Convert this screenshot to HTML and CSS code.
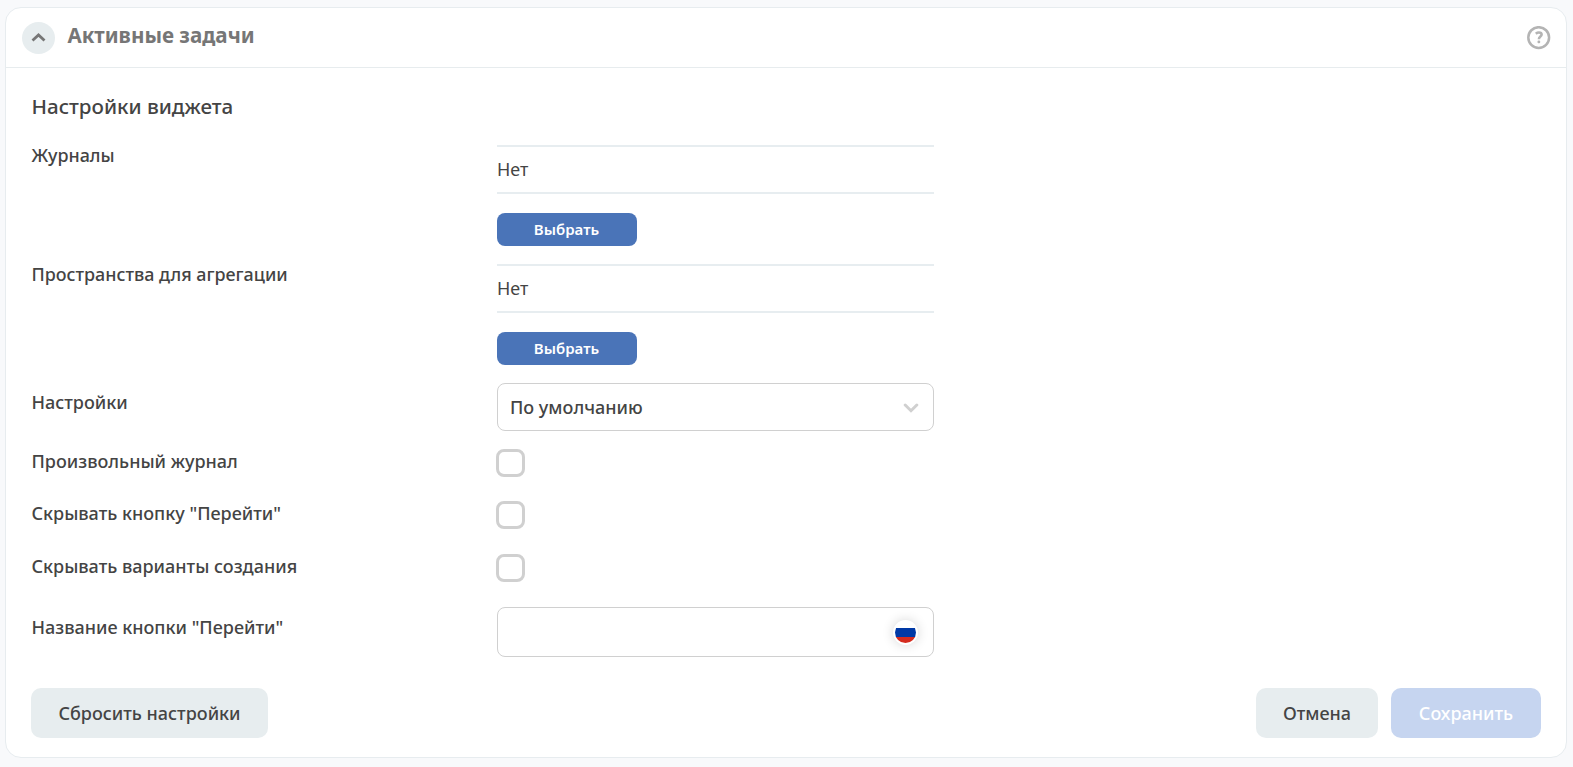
FILE: index.html
```html
<!DOCTYPE html>
<html lang="ru">
<head>
<meta charset="utf-8">
<title>Активные задачи</title>
<link rel="stylesheet" href="styles.css">
</head>
<body>
<section class="card">
  <header class="card-header">
    <button class="toggle" aria-label="Свернуть"><svg width="15" height="9" viewBox="0 0 15 9"><path d="M1.5 7.6 7.5 2l6 5.6"/></svg></button>
    <h1 class="title">Активные задачи</h1>
    <svg class="help" width="24" height="24" viewBox="0 0 24 24"><circle cx="11.7" cy="11.6" r="10.4"/><path d="M8.8 7.7Q10.3 6.5 11.9 6.5C13.6 6.5 14.6 7.3 14.6 8.6C14.6 10.6 11.9 10.6 11.9 13.2"/><rect x="10.5" y="14.6" width="2.7" height="2.6" rx="1"/></svg>
  </header>
  <div class="body">
    <h2 class="heading">Настройки виджета</h2>
    <div class="row row-list">
      <span class="label">Журналы</span>
      <div class="field"><div class="value">Нет</div><button class="choose">Выбрать</button></div>
    </div>
    <div class="row row-list">
      <span class="label">Пространства для агрегации</span>
      <div class="field"><div class="value">Нет</div><button class="choose">Выбрать</button></div>
    </div>
    <div class="row row-select">
      <span class="label">Настройки</span>
      <div class="select"><span>По умолчанию</span><svg width="16" height="10" viewBox="0 0 16 10"><path d="m2.2 2 5.8 5.7L13.8 2"/></svg></div>
    </div>
    <div class="row row-check"><span class="label">Произвольный журнал</span><span class="checkbox"></span></div>
    <div class="row row-check"><span class="label">Скрывать кнопку "Перейти"</span><span class="checkbox"></span></div>
    <div class="row row-check row-check-last"><span class="label">Скрывать варианты создания</span><span class="checkbox"></span></div>
    <div class="row row-input">
      <span class="label">Название кнопки "Перейти"</span>
      <div class="input"><span class="flag"><svg width="21" height="21" viewBox="0 0 21 21"><clipPath id="round"><circle cx="10.5" cy="10.5" r="10.5"/></clipPath><g clip-path="url(#round)"><path fill="#fff" d="M0 0h21v6H0z"/><path fill="#0039a6" d="M0 6h21v9H0z"/><path fill="#d52b1e" d="M0 15h21v6H0z"/></g></svg></span></div>
    </div>
    <footer class="actions">
      <button class="btn reset">Сбросить настройки</button>
      <button class="btn cancel">Отмена</button>
      <button class="btn save">Сохранить</button>
    </footer>
  </div>
</section>
</body>
</html>
```

FILE: styles.css
```css
* { box-sizing: border-box; }
body {
  margin: 0;
  padding: 7px 6px 9px 5px;
  height: 767px;
  overflow: hidden;
  background: #f8f9fb;
  color: #444;
  font: 500 18px/24px "Noto Sans", "Open Sans", sans-serif;
}
button { border: 0; padding: 0; font: inherit; color: inherit; }
svg { display: block; }
.card {
  height: 751px;
  border: 1px solid #e7ecef;
  border-radius: 16px;
  background: #fff;
}
.card-header {
  display: flex;
  align-items: center;
  height: 60px;
  padding: 0 15px 0 16px;
  border-bottom: 1px solid #e7ecee;
}
.toggle {
  display: flex;
  align-items: center;
  justify-content: center;
  width: 33px;
  height: 32px;
  border-radius: 50%;
  background: #e7edef;
}
.toggle path { fill: none; stroke: #767676; stroke-width: 2.8; }
.title { margin: -5px auto 0 12.4px; font-size: 20.6px; font-weight: 700; color: #767676; }
.help circle { fill: none; stroke: #b4b4b4; stroke-width: 2.5; }
.help path { fill: none; stroke: #b4b4b4; stroke-width: 2.6; }
.help rect { fill: #b4b4b4; }
.body { padding: 0 25px; }
.heading { margin: 0; padding: 26px 0 0 .5px; height: 75px; font-size: 20.6px; font-weight: 500; }
.row { display: grid; grid-template-columns: 466px 437px; align-items: start; }
.label { padding-left: .5px; }
.row-list { height: 119px; }
.row-list .label { font-size: 17.9px; }
.field { padding-top: 2px; }
.value {
  height: 49px;
  margin-bottom: 19px;
  padding-top: 10px;
  border: solid #e7edf0;
  border-width: 2px 0;
  font-size: 17.9px;
  font-weight: 400;
}
.choose {
  display: block;
  width: 140px;
  height: 33px;
  padding: 0 1px 2px 0;
  border-radius: 8px;
  background: #4a74b8;
  color: #fff;
  font-size: 15px;
  font-weight: 600;
}
.row-select { height: 68px; padding-top: 2px; }
.row-select .label { padding-top: 7px; }
.select {
  display: flex;
  align-items: center;
  justify-content: space-between;
  height: 48px;
  padding: 0 14.5px 0 12px;
  border: 1px solid #d0d0d0;
  border-radius: 8px;
}
.select svg { margin-top: 2px; }
.select path { fill: none; stroke: #d0d0d0; stroke-width: 3; stroke-linecap: round; }
.row-check { height: 52px; }
.checkbox { width: 29px; height: 28px; margin-left: -1px; border: 3px solid #d0d0d0; border-radius: 8px; }
.row-check-last { height: 54px; padding-top: 1px; }
.row-input { height: 81px; }
.row-input .label { padding-top: 8px; }
.input {
  display: flex;
  align-items: center;
  justify-content: flex-end;
  height: 50px;
  padding-right: 15px;
  border: 1px solid #d0d0d0;
  border-radius: 8px;
}
.flag { padding: 2px; border-radius: 50%; background: #fff; box-shadow: 0 0 12px rgba(0, 0, 0, .16); }
.actions { display: flex; gap: 13px; }
.btn { height: 50px; border-radius: 10px; background: #e7edef; }
.reset { width: 237px; margin-right: auto; }
.cancel { width: 122px; }
.save { width: 150px; background: #c6d5f0; color: #fff; }
```
